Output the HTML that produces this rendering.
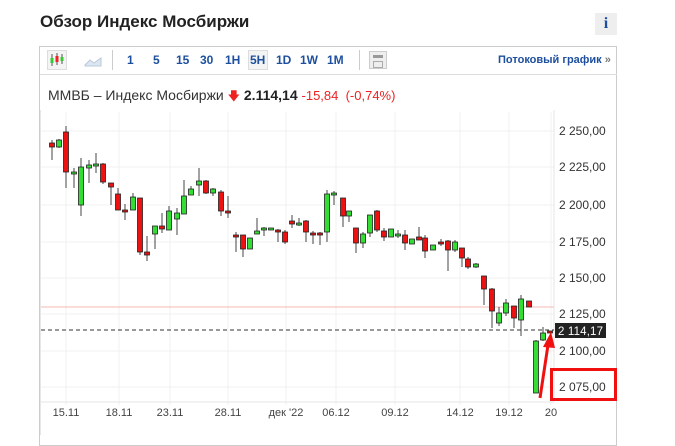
<!DOCTYPE html><html><head><meta charset="utf-8"><style>
body{margin:0;width:675px;height:435px;background:#fff;font-family:"Liberation Sans",sans-serif;overflow:hidden;position:relative}
.a{position:absolute}
.tb{color:#1d4f9e;font-weight:bold;font-size:12px;top:53px}
</style></head><body>
<div class="a" style="left:40px;top:12px;font-size:17px;font-weight:bold;color:#222">Обзор Индекс Мосбиржи</div>
<div class="a" style="left:595px;top:13px;width:22px;height:22px;background:#eee;color:#1d4f9e;font:bold 16px 'Liberation Serif',serif;text-align:center;line-height:22px">i</div>
<div class="a" style="left:39px;top:46px;width:578px;height:400px;border:1px solid #ccc;box-sizing:border-box"></div>
<div class="a" style="left:40px;top:74px;width:577px;height:1px;background:#ddd"></div>
<div class="a" style="left:47px;top:50px;width:20px;height:20px;border:1px solid #ddd;background:#f4f4f4;box-sizing:border-box"></div>
<svg class="a" style="left:48px;top:51px" width="18" height="18"><g stroke="#555"><line x1="4" y1="3" x2="4" y2="15"/><line x1="9" y1="2" x2="9" y2="14"/><line x1="14" y1="3" x2="14" y2="13"/></g><rect x="2.5" y="7" width="3" height="5" fill="#3c3"/><rect x="7.5" y="5" width="3" height="6" fill="#e22"/><rect x="12.5" y="6" width="3" height="4" fill="#3c3"/></svg>
<svg class="a" style="left:84px;top:55px" width="18" height="12"><path d="M1 10 L6 5 L10 8 L17 3 L17 11 L1 11Z" fill="#dde6f0" stroke="#b8c8da"/></svg>
<div class="a" style="left:112px;top:50px;width:1px;height:20px;background:#ccc"></div>
<div class="a tb" style="left:127px">1</div>
<div class="a tb" style="left:153px">5</div>
<div class="a tb" style="left:176px">15</div>
<div class="a tb" style="left:200px">30</div>
<div class="a tb" style="left:225px">1H</div>
<div class="a" style="left:248px;top:50px;width:20px;height:20px;border:1px solid #ddd;background:#f4f4f4;box-sizing:border-box"></div>
<div class="a tb" style="left:250px">5H</div>
<div class="a tb" style="left:276px">1D</div>
<div class="a tb" style="left:300px">1W</div>
<div class="a tb" style="left:327px">1M</div>
<div class="a" style="left:359px;top:50px;width:1px;height:20px;background:#ccc"></div>
<div class="a" style="left:369px;top:51px;width:18px;height:18px;border:1px solid #ccc;background:#eee;box-sizing:border-box"><div style="margin:3px;height:3px;background:#999"></div><div style="margin:0 3px;height:7px;border:1px solid #aaa;box-sizing:border-box"></div></div>
<div class="a tb" style="left:498px;font-size:11px;top:54px">Потоковый график <span style="color:#777">»</span></div>
<div class="a" style="left:48px;top:87px;font-size:14px;color:#333">ММВБ – Индекс Мосбиржи <span style="color:#e22;font-size:12px">&#129095;</span> <b style="color:#222">2.114,14</b> <span style="color:#e22;font-size:13px">-15,84 &nbsp;(-0,74%)</span></div>
<svg class="a" id="ch" style="left:0;top:0" width="675" height="435"></svg>
<script>
var c=[[52,143,147,140,160,0],[59,140,147,139,148,1],[66,132,172,126,188,0],[74,172,174,168,188,1],[81,167,205,158,216,1],[89,165,168,160,183,1],[96,164,166,153,173,1],[103,164,182,163,184,0],[111,183,187,183,205,0],[118,194,210,188,210,0],[125,210,212,204,220,0],[133,197,210,193,210,1],[140,198,252,198,255,0],[147,252,255,236,261,0],[155,226,234,226,249,1],[162,226,229,213,233,0],[169,211,230,206,230,1],[177,213,219,208,235,1],[184,196,214,180,214,1],[191,189,195,186,195,1],[199,181,185,168,196,1],[206,181,193,180,194,0],[213,189,193,188,196,1],[221,192,211,190,216,0],[228,211,213,196,218,0],[236,235,237,232,252,0],[243,235,249,235,257,0],[250,238,249,238,249,1],[257,231,234,218,234,1],[264,228,230,227,236,1],[271,228,230,228,230,1],[278,230,232,229,242,0],[285,232,242,230,244,0],[292,221,224,215,228,0],[299,223,225,218,226,1],[306,221,232,220,242,0],[313,233,235,231,244,0],[320,233,235,232,245,0],[327,194,232,190,242,1],[334,193,195,191,205,1],[343,198,216,198,227,0],[349,211,216,211,222,1],[356,228,243,228,253,0],[363,234,243,232,248,1],[370,215,233,215,237,1],[377,211,230,210,232,0],[384,231,237,228,241,0],[391,229,237,229,237,1],[398,234,236,230,238,1],[405,235,243,230,250,0],[412,239,244,239,244,1],[419,237,240,227,240,0],[425,238,251,235,258,0],[433,245,250,245,250,1],[441,242,244,239,246,0],[448,241,250,240,271,0],[455,242,250,240,252,1],[462,248,258,248,267,0],[468,259,267,257,269,0],[476,264,267,263,268,1],[484,276,289,276,305,0],[492,289,311,288,328,0],[499,313,323,307,326,1],[506,303,313,299,316,1],[514,306,318,306,328,0],[521,299,320,295,336,1],[529,301,307,301,307,0],[536,341,393,340,393,1],[543,333,340,327,341,1],[550,331,333,331,333,0]];
var s='';
var ys=[[131,'2 250,00'],[167,'2 225,00'],[205,'2 200,00'],[242,'2 175,00'],[278,'2 150,00'],[314,'2 125,00'],[351,'2 100,00'],[387,'2 075,00']];
ys.forEach(function(y){s+='<line x1="41" x2="554" y1="'+y[0]+'" y2="'+y[0]+'" stroke="#f0f0f0"/><text x="559" y="'+(y[0]+4)+'" font-size="12" fill="#333" font-family="Liberation Sans">'+y[1]+'</text>';});
var d=[[66,'15.11'],[119,'18.11'],[170,'23.11'],[228,'28.11'],[286,'дек \'22'],[336,'06.12'],[395,'09.12'],[460,'14.12'],[509,'19.12'],[551,'20']];
d.forEach(function(v){s+='<line x1="'+v[0]+'" x2="'+v[0]+'" y1="112" y2="405" stroke="#f0f0f0"/><text x="'+v[0]+'" y="416" text-anchor="middle" font-size="11" fill="#444" font-family="Liberation Sans">'+v[1]+'</text>';});
s+='<line x1="40" x2="40" y1="110" y2="435" stroke="#ccc"/><line x1="554" x2="554" y1="110" y2="402" stroke="#e4e4e4"/><line x1="41" x2="554" y1="402" y2="402" stroke="#e4e4e4"/>';
s+='<line x1="41" x2="554" y1="307" y2="307" stroke="#f5b8b0"/>';
s+='<line x1="41" x2="554" y1="330" y2="330" stroke="#333" stroke-dasharray="4,3"/>';
c.forEach(function(k){s+='<line x1="'+k[0]+'" x2="'+k[0]+'" y1="'+k[3]+'" y2="'+k[4]+'" stroke="#444"/><rect x="'+(k[0]-2.5)+'" y="'+k[1]+'" width="5" height="'+Math.max(2,k[2]-k[1])+'" fill="'+(k[5]?'#33dd33':'#ee1111')+'" stroke="#222" stroke-width="0.8"/>';});
s+='<rect x="555" y="323" width="51" height="15" fill="#222"/><text x="558" y="335" font-size="11.5" fill="#fff" font-family="Liberation Sans" textLength="45">2 114,17</text>';
s+='<rect x="551.5" y="369.5" width="64" height="30" fill="none" stroke="#f01010" stroke-width="3"/>';
s+='<line x1="540" y1="398" x2="548" y2="345" stroke="#f01010" stroke-width="3"/><polygon points="551,332 543,347 555,348" fill="#f01010"/>';
document.getElementById('ch').innerHTML=s;
</script>
</body></html>
